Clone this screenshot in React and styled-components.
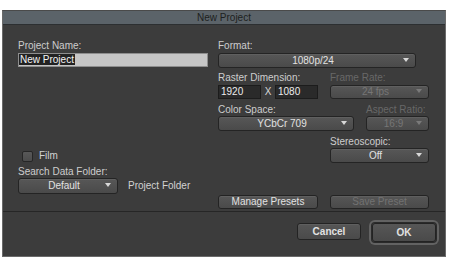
import React from "react";
import styled, { createGlobalStyle } from "styled-components";

const GlobalStyle = createGlobalStyle`
  body {
    margin: 0;
    background: #ffffff;
    font-family: "Liberation Sans", Arial, sans-serif;
  }
`;

const Page = styled.div`
  padding: 10px 0 0 2px;
`;

const Window = styled.div`
  width: 444px;
  height: 247px;
  box-sizing: border-box;
  border: 1px solid #6a6a6a;
  border-top-color: #4a4a4a;
  background: #3c3c3c;
  display: flex;
  flex-direction: column;
`;

const TitleBar = styled.div`
  height: 14px;
  box-sizing: border-box;
  background: #5b6369;
  border-bottom: 1px solid #2c2f31;
  font-size: 10px;
  line-height: 13px;
  text-align: center;
  color: #1d1f20;
`;

const Content = styled.div`
  height: 187px;
  box-sizing: border-box;
  padding: 15px 16px 0 15px;
  display: flex;
  gap: 10px;
  border-bottom: 1px solid #262626;
`;

const Column = styled.div`
  width: ${(p) => p.width}px;
  display: flex;
  flex-direction: column;
`;

const Label = styled.div`
  font-size: 10px;
  line-height: 12px;
  height: 12px;
  margin-top: ${(p) => p.top || 0}px;
  color: ${(p) => (p.disabled ? "#686868" : "#cdcdcd")};
  white-space: nowrap;
`;

const NameInput = styled.div`
  margin-top: 1px;
  height: 14px;
  box-sizing: border-box;
  background: #c6c6c6;
  border: 1px solid #8e8e8e;
  font-size: 10px;
  line-height: 12px;
`;

const Selected = styled.span`
  background: #222;
  color: #f4f4f4;
  padding: 0 1px;
`;

const Select = styled.div`
  position: relative;
  width: ${(p) => p.width}px;
  height: ${(p) => p.h || 15}px;
  margin-top: ${(p) => p.top || 0}px;
  box-sizing: border-box;
  border: 1px solid #242424;
  border-radius: 3px;
  background: linear-gradient(#575757, #4a4a4a);
  box-shadow: inset 0 1px 0 rgba(255, 255, 255, 0.06);
  font-size: 10px;
  line-height: ${(p) => (p.h || 15) - 2}px;
  text-align: center;
  color: ${(p) => (p.disabled ? "#767676" : "#e2e2e2")};
  padding-right: 8px;
  &::after {
    content: "";
    position: absolute;
    right: 6px;
    top: ${(p) => Math.round(((p.h || 15) - 2) / 2) - 3}px;
    border-left: 3px solid transparent;
    border-right: 3px solid transparent;
    border-top: 4px solid ${(p) => (p.disabled ? "#7a7a7a" : "#d8d8d8")};
  }
`;

const Row = styled.div`
  display: flex;
  align-items: ${(p) => p.align || "flex-start"};
  gap: ${(p) => p.gap || 0}px;
  margin-top: ${(p) => p.top || 0}px;
  justify-content: ${(p) => p.justify || "flex-start"};
`;

const Field = styled.div`
  width: ${(p) => p.width}px;
  display: flex;
  flex-direction: column;
`;

const NumBox = styled.div`
  width: ${(p) => p.width}px;
  height: 14px;
  box-sizing: border-box;
  background: #2a2a2a;
  border: 1px solid #1c1c1c;
  font-size: 10px;
  line-height: 12px;
  color: #ececec;
  padding-left: 2px;
`;

const Times = styled.span`
  font-size: 10px;
  line-height: 14px;
  color: #d6d6d6;
  width: 14px;
  text-align: center;
`;

const Check = styled.div`
  width: 11px;
  height: 11px;
  box-sizing: border-box;
  border: 1px solid #262626;
  border-radius: 2px;
  background: linear-gradient(#585858, #4c4c4c);
  margin-left: 4px;
`;

const Plain = styled.span`
  font-size: 10px;
  line-height: 12px;
  color: #d2d2d2;
`;

const Button = styled.div`
  width: ${(p) => p.width}px;
  height: ${(p) => p.h || 14}px;
  box-sizing: border-box;
  border: 1px solid #232323;
  border-radius: 3px;
  background: linear-gradient(#565656, #4a4a4a);
  box-shadow: ${(p) =>
    p.focus
      ? "0 0 0 1px #2a2a2a, 0 0 0 3px #626262"
      : "inset 0 1px 0 rgba(255, 255, 255, 0.06)"};
  font-size: 10px;
  font-weight: ${(p) => (p.bold ? 700 : 400)};
  line-height: ${(p) => (p.h || 14) - 2}px;
  text-align: center;
  color: ${(p) => (p.disabled ? "#727272" : "#e2e2e2")};
`;

const Footer = styled.div`
  flex: 1;
  display: flex;
  justify-content: flex-end;
  align-items: flex-start;
  gap: 11px;
  padding: 11px 9px 0 0;
`;

export default function App() {
  return (
    <Page>
      <GlobalStyle />
      <Window>
        <TitleBar>New Project</TitleBar>
        <Content>
          <Column width={190}>
            <Label>Project Name:</Label>
            <NameInput>
              <Selected>New Project</Selected>
            </NameInput>
            <Row align="center" gap={6} top={83}>
              <Check />
              <Plain>Film</Plain>
            </Row>
            <Label top={4}>Search Data Folder:</Label>
            <Row align="center" gap={10}>
              <Select width={100} h={16}>
                Default
              </Select>
              <Plain>Project Folder</Plain>
            </Row>
          </Column>
          <Column width={211}>
            <Label>Format:</Label>
            <Select width={198} top={1}>
              1080p/24
            </Select>
            <Row gap={12} top={4}>
              <Field width={100}>
                <Label>Raster Dimension:</Label>
                <Row top={1}>
                  <NumBox width={43}>1920</NumBox>
                  <Times>X</Times>
                  <NumBox width={43}>1080</NumBox>
                </Row>
              </Field>
              <Field width={99}>
                <Label disabled>Frame Rate:</Label>
                <Select width={99} h={14} top={1} disabled>
                  24 fps
                </Select>
              </Field>
            </Row>
            <Row gap={12} top={5}>
              <Field width={136}>
                <Label>Color Space:</Label>
                <Select width={136}>YCbCr 709</Select>
              </Field>
              <Field width={63}>
                <Label disabled>Aspect Ratio:</Label>
                <Select width={63} disabled>
                  16:9
                </Select>
              </Field>
            </Row>
            <Row justify="flex-end" top={5}>
              <Field width={99}>
                <Label>Stereoscopic:</Label>
                <Select width={99}>Off</Select>
              </Field>
            </Row>
            <Row gap={12} top={32}>
              <Button width={100}>Manage Presets</Button>
              <Button width={99} disabled>
                Save Preset
              </Button>
            </Row>
          </Column>
        </Content>
        <Footer>
          <Button width={64} h={17} bold>
            Cancel
          </Button>
          <Button width={64} h={19} bold focus>
            OK
          </Button>
        </Footer>
      </Window>
    </Page>
  );
}
